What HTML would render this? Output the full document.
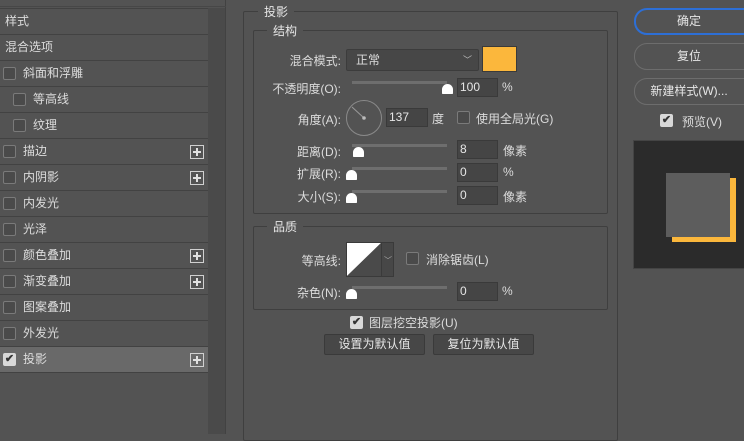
<!DOCTYPE html>
<html><head><meta charset="utf-8"><style>
*{margin:0;padding:0;box-sizing:border-box}
html,body{width:744px;height:434px}
body{background:#535353;font-family:"Liberation Sans","Noto Sans CJK SC",sans-serif;font-size:12px;color:#dcdcdc;position:relative;overflow:hidden}
.a{position:absolute}
.row{position:absolute;left:0;width:208px;height:26px;border-top:1px solid #424242;line-height:25px}
.cb{position:absolute;width:13px;height:13px;border:1px solid #7a7a7a;border-radius:2px;background:#4a4a4a}
.cbk{position:absolute;width:13px;height:13px;border-radius:2px;background:#d8d8d8;color:#333;font-size:11px;line-height:13px;text-align:center;font-weight:bold}
.plus{position:absolute;left:190px;top:6px;width:14px;height:14px;border:1px solid #d0d0d0;}
.plus:before{content:"";position:absolute;left:2px;top:5px;width:8px;height:2px;background:#e0e0e0}
.plus:after{content:"";position:absolute;left:5px;top:2px;width:2px;height:8px;background:#e0e0e0}
.box{position:absolute;border:1px solid #3f3f3f;border-radius:2px}
.lg{position:absolute;background:#535353;padding:0 6px;color:#e6e6e6}
.inp{position:absolute;height:19px;background:#454545;border:1px solid #3a3a3a;color:#e6e6e6;line-height:17px;padding-left:2px;font-size:12px}
.trk{position:absolute;height:3px;background:#6e6e6e}
.th{position:absolute;width:11px;height:10px;background:#fff;border-radius:6px 6px 1px 1px}
.lbl{position:absolute;text-align:right;width:100px}
.btn{position:absolute;border:1px solid #6d6d6d;border-radius:13px;text-align:center;color:#e6e6e6;height:27px;line-height:25px}
.btn2{position:absolute;height:21px;background:#474747;border:1px solid #3a3a3a;border-radius:2px;text-align:center;line-height:19px;color:#e6e6e6}
</style></head><body>
<div class="a" style="left:0;top:0;width:226px;height:434px;border-right:1px solid #424242"></div>
<div class="a" style="left:0;top:6px;width:226px;height:1px;background:#474747"></div>
<div class="a" style="left:208px;top:8px;width:17px;height:426px;background:#4a4a4a"></div>
<div class="row" style="top:8px;padding-left:5px">样式</div>
<div class="row" style="top:34px;padding-left:5px">混合选项</div>
<div class="row" style="top:60px"><div class="cb" style="left:3px;top:6px"></div><span class="a" style="left:23px">斜面和浮雕</span></div>
<div class="row" style="top:86px"><div class="cb" style="left:13px;top:6px"></div><span class="a" style="left:33px">等高线</span></div>
<div class="row" style="top:112px"><div class="cb" style="left:13px;top:6px"></div><span class="a" style="left:33px">纹理</span></div>
<div class="row" style="top:138px"><div class="cb" style="left:3px;top:6px"></div><span class="a" style="left:23px">描边</span><div class="plus"></div></div>
<div class="row" style="top:164px"><div class="cb" style="left:3px;top:6px"></div><span class="a" style="left:23px">内阴影</span><div class="plus"></div></div>
<div class="row" style="top:190px"><div class="cb" style="left:3px;top:6px"></div><span class="a" style="left:23px">内发光</span></div>
<div class="row" style="top:216px"><div class="cb" style="left:3px;top:6px"></div><span class="a" style="left:23px">光泽</span></div>
<div class="row" style="top:242px"><div class="cb" style="left:3px;top:6px"></div><span class="a" style="left:23px">颜色叠加</span><div class="plus"></div></div>
<div class="row" style="top:268px"><div class="cb" style="left:3px;top:6px"></div><span class="a" style="left:23px">渐变叠加</span><div class="plus"></div></div>
<div class="row" style="top:294px"><div class="cb" style="left:3px;top:6px"></div><span class="a" style="left:23px">图案叠加</span></div>
<div class="row" style="top:320px"><div class="cb" style="left:3px;top:6px"></div><span class="a" style="left:23px">外发光</span></div>
<div class="row" style="top:346px;background:#696969;border-bottom:1px solid #424242;height:27px"><div class="cbk" style="left:3px;top:6px">✔</div><span class="a" style="left:23px">投影</span><div class="plus"></div></div>

<div class="box" style="left:243px;top:11px;width:375px;height:430px"></div>
<div class="lg" style="left:258px;top:3px">投影</div>
<div class="box" style="left:253px;top:30px;width:355px;height:184px"></div>
<div class="lg" style="left:267px;top:22px">结构</div>

<div class="lbl" style="left:241px;top:52px">混合模式:</div>
<div class="a" style="left:346px;top:49px;width:133px;height:22px;background:#474747;border:1px solid #3c3c3c;border-radius:2px;padding-left:9px;line-height:20px">正常<span class="a" style="right:6px;top:0;font-size:9px;color:#bbb">﹀</span></div>
<div class="a" style="left:482px;top:46px;width:35px;height:26px;background:#fbb73c;border:1px solid #3a3a3a"></div>

<div class="lbl" style="left:241px;top:80px">不透明度(O):</div>
<div class="trk" style="left:352px;top:81px;width:95px"></div>
<div class="th" style="left:442px;top:84px"></div>
<div class="inp" style="left:457px;top:78px;width:41px">100</div><span class="a" style="left:502px;top:80px">%</span>

<div class="lbl" style="left:241px;top:111px">角度(A):</div>
<div class="a" style="left:346px;top:100px;width:36px;height:36px;border:1px solid #8a8a8a;border-radius:50%"></div>
<svg class="a" style="left:346px;top:100px" width="36" height="36"><line x1="18" y1="18" x2="6" y2="7" stroke="#9a9a9a" stroke-width="1"/><circle cx="18" cy="18" r="1.8" fill="#bbb"/></svg>
<div class="inp" style="left:386px;top:108px;width:42px">137</div><span class="a" style="left:432px;top:110px">度</span>
<div class="cb" style="left:457px;top:111px"></div><span class="a" style="left:476px;top:110px">使用全局光(G)</span>

<div class="lbl" style="left:241px;top:143px">距离(D):</div>
<div class="trk" style="left:352px;top:144px;width:95px"></div>
<div class="th" style="left:353px;top:147px"></div>
<div class="inp" style="left:457px;top:140px;width:41px">8</div><span class="a" style="left:503px;top:142px">像素</span>

<div class="lbl" style="left:241px;top:165px">扩展(R):</div>
<div class="trk" style="left:352px;top:167px;width:95px"></div>
<div class="th" style="left:346px;top:170px"></div>
<div class="inp" style="left:457px;top:163px;width:41px">0</div><span class="a" style="left:503px;top:165px">%</span>

<div class="lbl" style="left:241px;top:188px">大小(S):</div>
<div class="trk" style="left:352px;top:190px;width:95px"></div>
<div class="th" style="left:346px;top:193px"></div>
<div class="inp" style="left:457px;top:186px;width:41px">0</div><span class="a" style="left:503px;top:188px">像素</span>

<div class="box" style="left:253px;top:226px;width:355px;height:84px"></div>
<div class="lg" style="left:267px;top:218px">品质</div>
<div class="lbl" style="left:241px;top:252px">等高线:</div>
<div class="a" style="left:346px;top:242px;width:48px;height:35px;border:1px solid #3a3a3a;background:#474747"></div>
<div class="a" style="left:381px;top:243px;width:1px;height:33px;background:#3a3a3a"></div>
<svg class="a" style="left:347px;top:243px" width="34" height="33"><polygon points="0,0 34,0 0,33" fill="#fff"/><polygon points="34,0 34,33 0,33" fill="#4a4a4a"/></svg>
<span class="a" style="left:384px;top:255px;font-size:8px;color:#aaa">﹀</span>
<div class="cb" style="left:406px;top:252px"></div><span class="a" style="left:426px;top:251px">消除锯齿(L)</span>

<div class="lbl" style="left:241px;top:284px">杂色(N):</div>
<div class="trk" style="left:352px;top:286px;width:95px"></div>
<div class="th" style="left:346px;top:289px"></div>
<div class="inp" style="left:457px;top:282px;width:41px">0</div><span class="a" style="left:502px;top:284px">%</span>

<div class="cbk" style="left:350px;top:316px">✔</div><span class="a" style="left:369px;top:314px">图层挖空投影(U)</span>
<div class="btn2" style="left:324px;top:334px;width:101px">设置为默认值</div>
<div class="btn2" style="left:433px;top:334px;width:101px">复位为默认值</div>

<div class="btn" style="left:634px;top:8px;width:130px;border-color:#2d6fd6;border-width:2px;line-height:23px;padding-right:20px">确定</div>
<div class="btn" style="left:634px;top:43px;width:130px;padding-right:20px">复位</div>
<div class="btn" style="left:634px;top:78px;width:130px;padding-right:20px">新建样式(W)...</div>
<div class="cbk" style="left:660px;top:114px">✔</div><span class="a" style="left:682px;top:113px">预览(V)</span>
<div class="a" style="left:633px;top:140px;width:120px;height:129px;background:#2b2b2b;border:1px solid #444"></div>
<div class="a" style="left:672px;top:178px;width:64px;height:64px;background:#fbb73c"></div>
<div class="a" style="left:666px;top:173px;width:64px;height:64px;background:#5d5d5d"></div>
</body></html>
